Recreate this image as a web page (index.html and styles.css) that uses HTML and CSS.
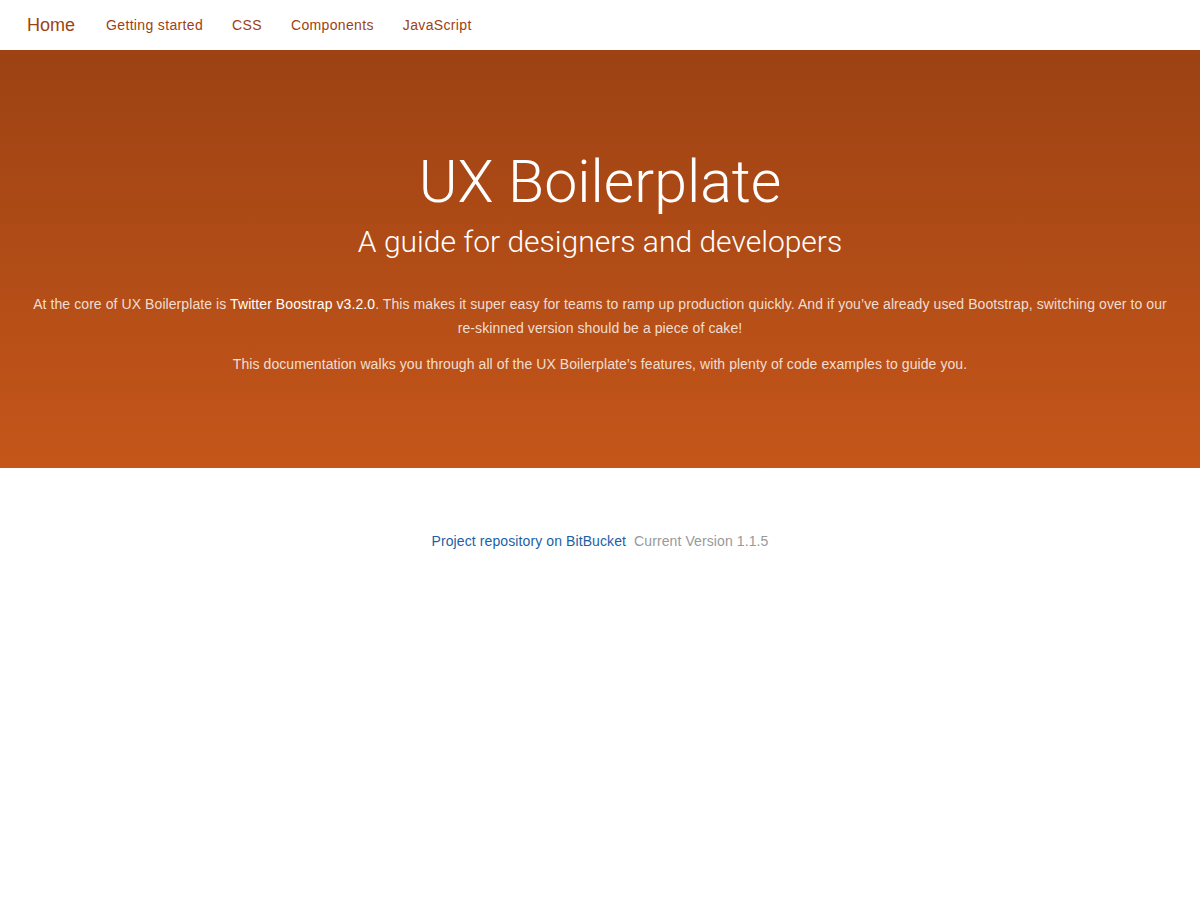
FILE: index.html
```html
<!doctype html>
<html lang="en">
  <head>
    <meta charset="UTF-8" />
    <meta name="viewport" content="width=device-width, initial-scale=1.0" />
    <title>UX Boilerplate</title>
    <link rel="stylesheet" href="styles.css">
  </head>
  <body>
    <nav class="navbar">
      <a class="brand" href="#">Home</a>
      <ul class="nav-links">
        <li><a href="#">Getting started</a></li>
        <li><a href="#">CSS</a></li>
        <li><a href="#">Components</a></li>
        <li><a href="#">JavaScript</a></li>
      </ul>
    </nav>

    <header class="hero">
      <h1>UX Boilerplate</h1>
      <h2>A guide for designers and developers</h2>
      <p>At the core of UX Boilerplate is <a href="#">Twitter Boostrap v3.2.0</a>. This makes it super easy for teams to ramp up production quickly. And if you’ve already used Bootstrap, switching over to our re-skinned version should be a piece of cake!</p>
      <p>This documentation walks you through all of the UX Boilerplate’s features, with plenty of code examples to guide you.</p>
    </header>

    <footer class="footer">
      <a href="#">Project repository on BitBucket</a>
      <span class="version">Current Version 1.1.5</span>
    </footer>
  </body>
</html>
```

FILE: styles.css
```css
body {
  margin: 0;
  font-family: "Liberation Sans", Arial, sans-serif;
  font-size: 14px;
  line-height: 1.42857;
  color: #333;
  background: #fff;
}

a {
  text-decoration: none;
}

.navbar {
  display: flex;
  align-items: center;
  height: 50px;
  padding: 0 15px;
}

.brand {
  font-size: 18px;
  color: #9c4213;
  padding: 2px 16px 0 12px;
}

.nav-links {
  display: flex;
  list-style: none;
  margin: 0;
  padding: 0;
}

.nav-links a {
  display: block;
  padding: 16px 14px 14px 15px;
  color: #9c4213;
  font-size: 14px;
  letter-spacing: 0.35px;
}

.hero {
  background: linear-gradient(to bottom, #9c4213, #c5561a);
  color: #fff;
  text-align: center;
  padding: 100px 30px 80px;
}

.hero h1 {
  font-family: Roboto, "Liberation Sans", sans-serif;
  font-weight: 300;
  font-size: 59px;
  line-height: 1.1;
  margin: 0;
}

.hero h2 {
  font-family: Roboto, "Liberation Sans", sans-serif;
  font-weight: 300;
  font-size: 30px;
  line-height: 1.1;
  margin: 10px 0 34px;
}

.hero p {
  color: rgba(255, 255, 255, 0.82);
  line-height: 24px;
  letter-spacing: 0.08px;
  margin: 0 0 12px;
}

.hero p a {
  color: #fff;
}

.footer {
  text-align: center;
  padding: 64px 0;
  letter-spacing: 0.1px;
}

.footer a {
  color: #1b5fa8;
}

.version {
  color: #999;
  margin-left: 4px;
}
```
